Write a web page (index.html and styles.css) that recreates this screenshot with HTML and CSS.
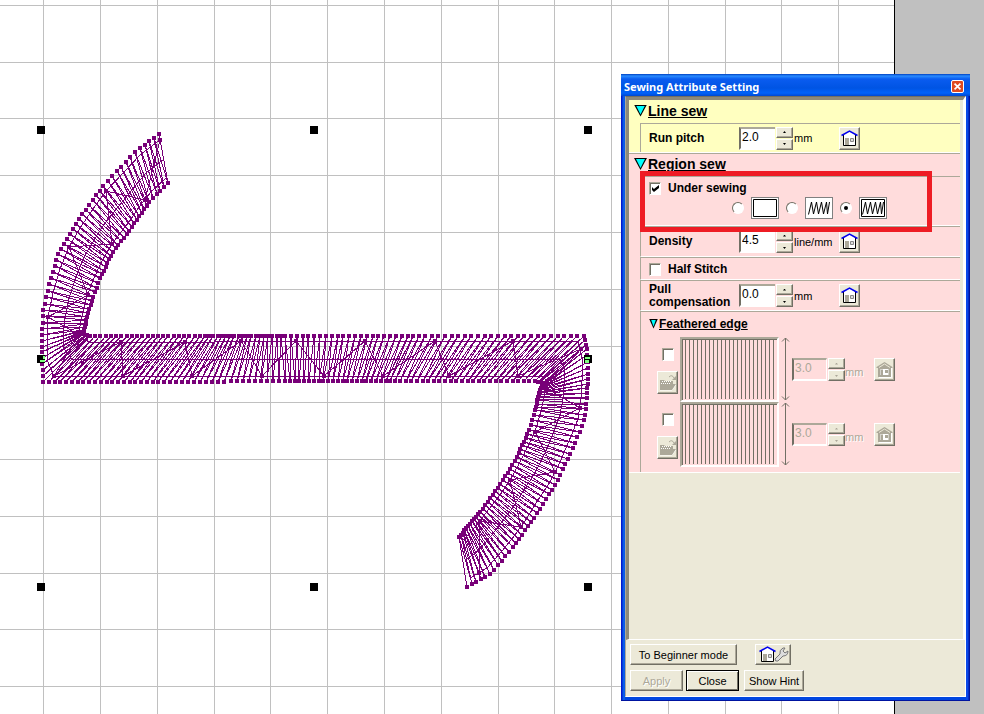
FILE: index.html
```html
<!DOCTYPE html>
<html lang="en">
<head>
<meta charset="utf-8">
<title>Sewing Attribute Setting</title>
<link rel="stylesheet" href="styles.css">
</head>
<body>
<svg class="symbols" aria-hidden="true">
  <symbol id="home" viewBox="0 0 17 17">
    <path d="M2 5.500L8.500 1.500 15 5.500V15H2z" fill="#fff"/>
    <path d="M4 8h4v7H4z" fill="#aca899"/><path d="M9.500 8.500h3v3h-3z" fill="#ddd" stroke="#888"/>
    <path d="M2.500 5v10.500h12V5" fill="none" stroke="#000"/>
    <path d="M0.500 5.500L8.500 1 16.500 5.500" fill="none" stroke="#0000f0" stroke-width="1.500"/>
  </symbol>
  <symbol id="home-off" viewBox="0 0 17 17">
    <path d="M3 16.500h12.500V7M6.500 14V9h6v4" fill="none" stroke="#fff"/>
    <path d="M0.500 6L8.500 1 16.500 6v1H15v9H2V7H.500z" fill="#aca899"/>
    <path d="M3 6.500L8.500 3 14 6.500" fill="none" stroke="#ece9d8"/>
    <path d="M4.500 8h8v6h-8z" fill="#fff"/><path d="M5 8.500h2V14H5zM9 9h3v3H9z" fill="#aca899"/>
  </symbol>
  <symbol id="folder" viewBox="0 0 17 17">
    <path d="M1 16h12l5-7" fill="none" stroke="#fff"/>
    <path d="M1 6h4l1 1h8v3h3l-4 6H1z" fill="#aca899"/>
    <path d="M3 7.500h10M2 9.500h10" stroke="#fff" stroke-dasharray="1 1" fill="none"/>
    <path d="M10 3q3-3 5 1" fill="none" stroke="#aca899"/><path d="M17 2v4h-4z" fill="#aca899"/>
  </symbol>
  <symbol id="zigzag" viewBox="0 0 24 18">
    <path d="M1.500 15.500L4.500 3l2 12L9.500 3l2 12L14.500 3l2 12L19.500 3l1 12L22.500 3" fill="none" stroke="#000"/>
  </symbol>
</svg>

<main class="workspace">
  <svg class="drawing" id="drawing" width="895" height="714" role="img" aria-label="Stitch pattern"></svg>

  <section class="dialog" aria-labelledby="dialog-title">
    <header class="titlebar">
      <h1 id="dialog-title">Sewing Attribute Setting</h1>
      <button class="close" aria-label="Close window"><svg width="13" height="13" viewBox="0 0 13 13"><path d="M3 3l7 7M10 3l-7 7" stroke="#fff" stroke-width="2"/></svg></button>
    </header>
    <div class="body">
      <div class="attributes">
        <section class="group line">
          <h2><i class="tri"></i>Line sew</h2>
          <div class="row field-row">
            <label for="pitch">Run pitch</label>
            <div class="number"><input id="pitch" type="text" value="2.0"><div class="spin"><button aria-label="Increase"><i></i></button><button aria-label="Decrease"><i></i></button></div></div>
            <span class="unit">mm</span>
            <button class="icon-button" aria-label="Default pitch"><svg><use href="#home"/></svg></button>
          </div>
        </section>
        <section class="group region">
          <h2><i class="tri"></i>Region sew</h2>
          <div class="row under">
            <div class="check"><input type="checkbox" id="under" checked><label for="under">Under sewing</label></div>
            <div class="choices">
              <input type="radio" name="type" id="t1"><label for="t1" aria-label="Outline"><svg width="24" height="18"><path d="M.500.500h23v17H.500z" fill="#fff" stroke="#000"/></svg></label>
              <input type="radio" name="type" id="t2"><label for="t2" aria-label="Zigzag"><svg width="24" height="18"><use href="#zigzag"/></svg></label>
              <input type="radio" name="type" id="t3" checked><label for="t3" aria-label="Outline and zigzag"><svg width="24" height="18"><path d="M.500.500h23v17H.500z" fill="#fff" stroke="#000"/><use href="#zigzag"/></svg></label>
            </div>
            <div class="highlight"></div>
          </div>
          <div class="row field-row">
            <label for="density">Density</label>
            <div class="number"><input id="density" type="text" value="4.5"><div class="spin"><button aria-label="Increase"><i></i></button><button aria-label="Decrease"><i></i></button></div></div>
            <span class="unit">line/mm</span>
            <button class="icon-button" aria-label="Default density"><svg><use href="#home"/></svg></button>
          </div>
          <div class="row half"><div class="check"><input type="checkbox" id="half"><label for="half">Half Stitch</label></div></div>
          <div class="row field-row">
            <label for="pull">Pull compensation</label>
            <div class="number"><input id="pull" type="text" value="0.0"><div class="spin"><button aria-label="Increase"><i></i></button><button aria-label="Decrease"><i></i></button></div></div>
            <span class="unit">mm</span>
            <button class="icon-button" aria-label="Default compensation"><svg><use href="#home"/></svg></button>
          </div>
          <div class="row feather">
            <h3><i class="tri small"></i>Feathered edge</h3>
            <div class="edge">
              <div class="tools"><input type="checkbox" aria-label="Feather top edge"><button class="icon-button" disabled aria-label="Open top edge"><svg><use href="#folder"/></svg></button></div>
              <div class="preview"></div>
              <svg class="arrow" width="9" height="64" viewBox="0 0 9 64"><path d="M4.500 1v62M1 4.500L4.500 1 8 4.500M1 59.500L4.500 63 8 59.500" /></svg>
              <div class="number"><input type="text" value="3.0" disabled aria-label="Top edge width"><div class="spin"><button disabled aria-label="Increase"><i></i></button><button disabled aria-label="Decrease"><i></i></button></div></div>
              <span class="unit">mm</span>
              <button class="icon-button" disabled aria-label="Default top width"><svg><use href="#home-off"/></svg></button>
            </div>
            <div class="edge">
              <div class="tools"><input type="checkbox" aria-label="Feather bottom edge"><button class="icon-button" disabled aria-label="Open bottom edge"><svg><use href="#folder"/></svg></button></div>
              <div class="preview"></div>
              <svg class="arrow" width="9" height="64" viewBox="0 0 9 64"><path d="M4.500 1v62M1 4.500L4.500 1 8 4.500M1 59.500L4.500 63 8 59.500" /></svg>
              <div class="number"><input type="text" value="3.0" disabled aria-label="Bottom edge width"><div class="spin"><button disabled aria-label="Increase"><i></i></button><button disabled aria-label="Decrease"><i></i></button></div></div>
              <span class="unit">mm</span>
              <button class="icon-button" disabled aria-label="Default bottom width"><svg><use href="#home-off"/></svg></button>
            </div>
          </div>
        </section>
      </div>
      <footer>
        <div class="buttons wide">
          <button class="push mode">To Beginner mode</button>
          <button class="push settings" aria-label="Default settings"><svg width="34" height="17" viewBox="0 0 34 17">
            <use href="#home" x="3" y="0" width="17" height="17"/>
            <path d="M19 13l5-5q-1-4 3-6l2 0-2 3 2 2 3-2q0 5-5 5l-5 5q-3 1-3-2z" fill="#ddd" stroke="#777"/></svg></button>
        </div>
        <div class="buttons">
          <button class="push apply" disabled>Apply</button>
          <button class="push default">Close</button>
          <button class="push hint">Show Hint</button>
        </div>
      </footer>
    </div>
  </section>
</main>
<script src="drawing.js"></script>
</body>
</html>
```
FILE: styles.css
```css
* { box-sizing: border-box; }
body { margin: 0; background: #c0c0c0; font: 11px "Liberation Sans", Arial, sans-serif; color: #000; }
h1, h2, h3 { margin: 0; }
button, input { margin: 0; padding: 0; font: inherit; color: inherit; }
.symbols { position: absolute; width: 0; height: 0; }
.workspace { position: relative; min-height: 100vh; overflow: hidden; }
.drawing { display: block; background: #fff; border-right: 1px solid #000; }

/* dialog window */
.dialog { position: absolute; left: 621px; top: 74px; width: 349px; padding: 0 4px 3px; background: linear-gradient(90deg, #0019cf 0 1px, #0a5be8 2px 4px, #0046e0 4px 345px, #0a48e8 345px 347px, #0014a0 348px); border-bottom: 1px solid #0014a0; }
.titlebar { display: flex; align-items: center; justify-content: space-between; height: 22px; margin: 0 -4px; padding: 2px 6px 0 3px; background: linear-gradient(#0040c0, #2a8cff 2px, #0a5cf0 5px, #0054e3 14px, #0062fa 19px, #0048d0); color: #fff; }
.titlebar h1 { font: bold 11px "Noto Sans", sans-serif; white-space: nowrap; }
.close { width: 13px; height: 13px; border: 1px solid #fff; border-radius: 2px; background: #e04a20; display: grid; place-items: center; }
.close svg { flex: none; width: 11px; height: 11px; }
.body { background: #ece9d8; border: 1px solid #fff; border-left-color: #aca899; border-top-color: #716f64; }
.attributes { height: 543px; padding-right: 3px; border: solid; border-width: 3px 2px 1px 3px; border-color: #8d8979 #fff #fff #8d8979; }
.group { background: #ffffc0; border-bottom: 1px solid #fff; }
.region { background: #ffdcdc; border-top: 1px solid #aca899; }
.group h2 { display: flex; align-items: center; gap: 1px; height: 23px; padding: 0 0 2px 5px; font: bold 14px/20px "Liberation Sans", Arial, sans-serif; text-decoration: underline; text-decoration-thickness: 1px; }
.region h2 { height: 22px; }
.tri { width: 13px; height: 12px; background: #000; clip-path: polygon(0 0, 100% 0, 50% 100%); position: relative; flex: none; }
.tri::after { content: ""; position: absolute; inset: 1px 2px 2px; background: #00ffff; clip-path: polygon(0 0, 100% 0, 50% 100%); }
.tri.small { width: 9px; height: 10px; }
.row { margin-left: 11px; border-left: 1px solid #aca899; border-top: 1px solid #aca899; border-bottom: 1px solid #fff; padding-left: 8px; }
.line .row { border-bottom: 0; }
.field-row { display: grid; grid-template-columns: 90px 55px 45px 21px; align-items: center; height: 31px; }
.line .field-row { height: 29px; }
.field-row label, .check label { font: bold 12px/13px "Liberation Sans", Arial, sans-serif; }
.field-row label { width: 80px; }

/* numeric fields */
.number { display: flex; height: 23px; gap: 1px; }
.number input { width: 36px; height: 23px; padding: 0 0 3px 1px; border: 2px solid; border-color: #aca899 #fff #fff #716f64; border-right: 0; border-radius: 0; background: #fff; font-size: 12px; }
.spin { display: grid; gap: 1px; width: 17px; }
.spin button { height: 11px; }
.spin button, .icon-button, .push { border: 1px solid; border-color: #fff #716f64 #716f64 #fff; background: #ece9d8; box-shadow: inset -1px -1px #aca899; display: grid; place-items: center; border-radius: 0; }
.spin i { width: 3px; height: 2px; background: #000; clip-path: polygon(50% 0, 100% 100%, 0 100%); }
.spin button + button i { transform: rotate(180deg); }
.icon-button { width: 21px; height: 23px; }
.icon-button svg { width: 17px; height: 17px; }

/* tick boxes and radios */
input[type=checkbox] { appearance: none; width: 12px; height: 13px; flex: none; background: #fff; border: 1px solid; border-color: #aca899 #fff #fff #aca899; box-shadow: inset 1px 1px #716f64; }
input[type=checkbox]:checked::after { content: ""; display: block; width: 7px; height: 7px; margin: 2px; background: #000; clip-path: polygon(0 28%, 28% 58%, 100% 0, 100% 42%, 28% 100%, 0 70%); }
.check { display: flex; align-items: center; gap: 7px; }
.half { height: 23px; padding-top: 5px; }
.under { position: relative; height: 50px; padding-top: 5px; }
.choices { display: flex; align-items: center; padding: 2px 0 0 83px; }
input[type=radio] { appearance: none; width: 12px; height: 12px; border-radius: 50%; border: 1px solid; border-color: #716f64 #fff #fff #716f64; background: #fff; display: grid; place-items: center; }
input[type=radio]:checked::after { content: ""; width: 4px; height: 4px; border-radius: 50%; background: #000; }
.choices label { width: 28px; height: 22px; margin: 0 7px; border: 1px solid #808080; padding: 1px; background: #fff; }
.choices svg, .push svg { display: block; }
.highlight { position: absolute; left: -1px; top: -6px; width: 292px; height: 61px; border: 5px solid #ee1c24; z-index: 1; }

/* feathered edge */
.feather { padding-bottom: 5px; border-bottom: 0; }
.feather h3 { display: flex; align-items: center; gap: 1px; height: 25px; padding-bottom: 2px; font: bold 12px/22px "Liberation Sans", Arial, sans-serif; text-decoration: underline; }
.edge { display: flex; height: 65px; padding-left: 8px; color: #aca899; }
.tools { width: 23px; padding-top: 11px; }
.tools input { display: block; margin: 0 0 10px 5px; }
.preview { width: 99px; height: 65px; border: 2px solid; border-color: #aca899 #fff #fff #aca899; box-shadow: inset 1px 1px #716f64; background: repeating-linear-gradient(90deg, transparent 0 3px, #716f64 3px 4px) content-box; padding: 1px 1px 1px 0; }
.arrow { margin: 0 2px; fill: none; stroke: #716f64; }
.edge .number { margin: 21px 0 0; }
.edge .number input { width: 35px; background: transparent; border-right: 1px solid #fff; }
.edge .unit { width: 29px; padding-top: 29px; }
.edge > .icon-button { margin-top: 21px; }
.edge i { background: #aca899; }
.edge .unit, .push:disabled { text-shadow: 1px 1px #fff; }

/* footer */
footer { padding: 4px 4px 5px; }
.buttons { display: flex; gap: 5px; height: 21px; }
.buttons.wide { gap: 18px; margin-bottom: 5px; }
.push { height: 21px; font-size: 11px; padding: 0; white-space: nowrap; }
.mode { width: 107px; }
.settings { width: 36px; }
.apply { width: 53px; color: #aca899; }
.default { width: 53px; border: 1px solid #000; box-shadow: inset 1px 1px #fff, inset -1px -1px #716f64; margin-left: -2px; }
.hint { width: 60px; }
```
FILE: drawing.js
```js
const svg = document.getElementById('drawing');
const add = (name, attrs) => {
  const el = document.createElementNS('http://www.w3.org/2000/svg', name);
  for (const key in attrs) el.setAttribute(key, attrs[key]);
  svg.appendChild(el);
};

// grid, ruled once per centimetre
const PITCH = 56.77;
let grid = '';
for (let i = 0; i < 15; i++) grid += `M${Math.round(43.4 + i * PITCH) + 0.5} 0V2000`;
for (let i = 0; i < 30; i++) grid += `M0 ${Math.round(4.9 + i * PITCH) + 0.5}H895`;
add('path', { d: grid, stroke: '#c0c0c0', fill: 'none' });

// facing points of the two edges: [x1, y1, x2, y2, stitches up to the next pair]
const rails = [
  [159, 134, 168, 183, 5], [135, 152, 149, 202, 7], [103, 186, 132, 227, 7], [79, 219, 113, 252, 7],
  [58, 254, 100, 278, 4], [51, 278, 93, 297, 5], [43, 310, 87, 317, 4], [42, 335, 84, 330, 4],
  [42, 358, 84, 334, 4], [43, 382, 90, 336, 22], [170, 382, 205, 336, 19], [285, 381, 285, 336, 24],
  [400, 381, 425, 336, 24], [535, 381, 584, 336, 3], [543, 383, 587, 349, 4], [541, 388, 588, 374, 5],
  [538, 397, 587, 398, 4], [535, 410, 584, 420, 4], [529, 430, 575, 443, 7], [517, 457, 558, 480, 8],
  [498, 488, 534, 518, 7], [480, 512, 513, 547, 6], [468, 526, 490, 574, 5], [459, 537, 467, 587, 0]
];
const pairs = [];
rails.forEach((a, i) => {
  const b = rails[i + 1] || a;
  const n = Math.max(1, a[4]);
  for (let k = 0; k < n; k++)
    pairs.push([0, 1, 2, 3].map(c => a[c] + (b[c] - a[c]) * k / n));
});
const across = (q, f) => [Math.round(q[0] + (q[2] - q[0]) * f), Math.round(q[1] + (q[3] - q[1]) * f)];
const line = points => 'M' + points.map(p => p.join(' ')).join('L');
const dots = (points, size) => points.map(([x, y]) =>
  `M${x - size / 2} ${y - size / 2}h${size}v${size}h${-size}z`).join('');

const stitches = pairs.flatMap(q => [across(q, 0), across(q, 1)]);
const zigzag = pairs.filter((q, i) => i % 6 === 0).map((q, i) => across(q, i % 2 ? 0.88 : 0.12));
const runs = [0.12, 0.5, 0.88].map(f => pairs.filter((q, i) => i % 4 === 0).map(q => across(q, f)));
const purple = '#780078';
add('path', { d: line(stitches) + line(zigzag) + runs.map(line).join(''), fill: 'none', stroke: purple, 'shape-rendering': 'crispEdges' });
add('path', { d: dots(stitches, 4), fill: purple, 'shape-rendering': 'crispEdges' });
add('path', { d: dots(zigzag, 4), fill: purple, 'shape-rendering': 'crispEdges' });

// selection handles
for (const x of [37, 310, 584])
  for (const y of [126, 355, 583])
    if (x !== 310 || y !== 355) add('rect', { x, y, width: 8, height: 8 });
add('path', { d: 'M40 360h5v2h-5zM43 356h2v3h-2zM585 357h5v2h-5zM585 360h4v3h-4z', fill: '#80ff80' });
```
